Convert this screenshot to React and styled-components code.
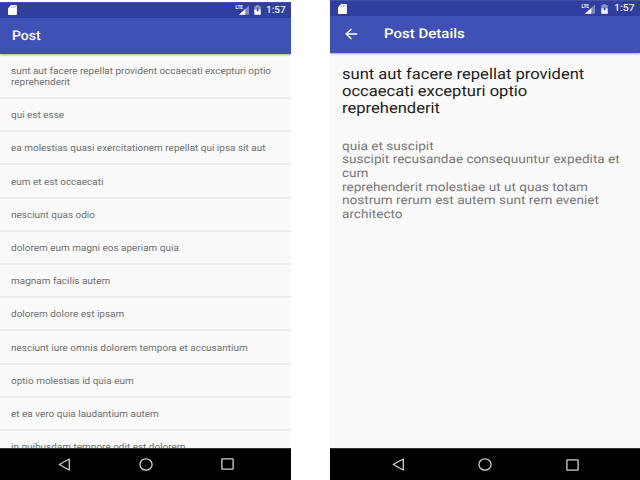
import React from "react";
import styled, { createGlobalStyle } from "styled-components";

const Global = createGlobalStyle`
  * { box-sizing: border-box; }
  body {
    margin: 0;
    background: #fff;
    font-family: Roboto, "Liberation Sans", sans-serif;
    text-rendering: geometricPrecision;
  }
`;

const Stage = styled.main`
  width: 640px;
  height: 480px;
  overflow: hidden;
  display: flex;
  align-items: flex-start;
  justify-content: space-between;
`;

const Phone = styled.section`
  width: ${(p) => p.$width}px;
  height: ${(p) => p.$height}px;
  margin-top: ${(p) => p.$top}px;
  flex: none;
  display: flex;
  flex-direction: column;
  overflow: hidden;
  background: #fafafa;
`;

const StatusBar = styled.div`
  height: ${(p) => p.$height}px;
  flex: none;
  display: flex;
  align-items: center;
  background: #303f9f;
  border-top: 1px solid #4451a7;
  padding: 0 6px 0 8px;
`;

const Spacer = styled.div`
  flex: 1;
`;

const Icon = styled.svg`
  display: block;
  flex: none;
  overflow: visible;
  margin-right: ${(p) => p.$gap || 0}px;
`;

const Clock = styled.span`
  display: block;
  width: ${(p) => p.$width}px;
  padding-top: 1px;
  font-size: 10px;
  line-height: 14px;
  font-weight: 500;
  color: #eef0fa;
  white-space: nowrap;
  transform: scaleX(${(p) => p.$stretch});
  transform-origin: left;
`;

const Toolbar = styled.header`
  height: ${(p) => p.$height}px;
  flex: none;
  display: flex;
  align-items: center;
  padding-left: ${(p) => p.$inset}px;
  background: #3f51b5;
  box-shadow: 0 1px 2px rgba(0, 0, 0, 0.32);
  z-index: 1;
`;

const ToolbarTitle = styled.h1`
  margin: 0;
  padding-top: 2px;
  font-size: 13.3px;
  line-height: 18px;
  font-weight: 500;
  color: #fff;
  white-space: nowrap;
  transform: scaleX(${(p) => p.$stretch});
  transform-origin: left;
`;

const List = styled.ul`
  flex: 1;
  min-height: 0;
  overflow: hidden;
  margin: 0;
  padding: 0;
  list-style: none;
`;

const Row = styled.li`
  height: ${(p) => (p.$tall ? 45 : 33.2)}px;
  display: flex;
  flex-direction: column;
  justify-content: center;
  padding: ${(p) => (p.$tall ? 3 : 2.6)}px 0 0 11.3px;
  border-bottom: 2px solid #ececec;
`;

const RowLine = styled.span`
  display: block;
  font-size: 9.5px;
  line-height: 11.2px;
  color: #707070;
  white-space: nowrap;
  transform: scaleX(1.05);
  transform-origin: left;
`;

const Details = styled.article`
  flex: 1;
  padding: 13px 0 0 12px;
`;

const Heading = styled.h2`
  margin: 0 0 23px;
  font-weight: 400;
  font-size: 15px;
  line-height: 17px;
  color: #222;
`;

const Body = styled.div`
  font-size: 12px;
  line-height: 13.7px;
  color: #777;
`;

const Line = styled.span`
  display: block;
  white-space: nowrap;
  transform: scaleX(${(p) => p.$stretch});
  transform-origin: left;
`;

const NavBar = styled.nav`
  height: ${(p) => p.$height}px;
  flex: none;
  display: flex;
  align-items: center;
  justify-content: space-between;
  padding: 0 ${(p) => p.$right}px 0 ${(p) => p.$left}px;
  background: #000;
  border-top: 1px solid #333;
`;

const SdCard = () => (
  <Icon width="9" height="10" viewBox="0 0 9 10">
    <path d="M3.2 0H8a.9.9 0 0 1 .9.9V9a.9.9 0 0 1-.9.9H.9A.9.9 0 0 1 0 9V3.2z" fill="#fff" />
    <path d="M3.7 1.2v1.7M5.4 1.2v1.7M7.1 1.2v1.7" stroke="#8e97cb" strokeWidth=".8" />
  </Icon>
);

const LteText = styled.text`
  font: 700 5.8px Roboto, sans-serif;
  fill: #fff;
`;

const Signal = ({ gap }) => (
  <Icon width="13" height="10" viewBox="0 0 13 10" $gap={gap}>
    <path d="M13 .4V9.8H3z" fill="#7e88c5" />
    <path d="M9.3 4V9.8H3z" fill="#fff" />
    <LteText x="-.4" y="4" textLength="7.2" lengthAdjust="spacingAndGlyphs">LTE</LteText>
  </Icon>
);

const Battery = ({ gap }) => (
  <Icon width="7" height="10" viewBox="0 0 7 10" $gap={gap}>
    <path d="M2.2 0h2.6v1H6.7v4H.3V1h1.9z" fill="#8791ca" />
    <path d="M.3 4.4h6.4V9.8H.3z" fill="#fff" />
    <path d="M4 2.6 2.2 5.6h1.2v2l1.7-3H4z" fill="#303f9f" />
  </Icon>
);

const BackArrow = ({ gap }) => (
  <Icon width="13" height="12" viewBox="0 0 13 12" $gap={gap}>
    <path d="M12.2 6H1.5M6.4 1.1 1.2 6l5.2 4.9" fill="none" stroke="#fff" strokeWidth="1.4" />
  </Icon>
);

const NavIcons = () => (
  <>
    <Icon width="12" height="13" viewBox="0 0 12 13">
      <path d="M11.3 1v11L1.2 6.5z" fill="none" stroke="#d0d0d0" strokeWidth="1.3" strokeLinejoin="round" />
    </Icon>
    <Icon width="14" height="13" viewBox="0 0 14 13">
      <ellipse cx="7" cy="6.5" rx="6.1" ry="5.7" fill="none" stroke="#d0d0d0" strokeWidth="1.3" />
    </Icon>
    <Icon width="13" height="12" viewBox="0 0 13 12">
      <rect x=".9" y=".9" width="11.2" height="10.2" rx=".4" fill="none" stroke="#d0d0d0" strokeWidth="1.3" />
    </Icon>
  </>
);

const posts = [
  ["sunt aut facere repellat provident occaecati excepturi optio", "reprehenderit"],
  ["qui est esse"],
  ["ea molestias quasi exercitationem repellat qui ipsa sit aut"],
  ["eum et est occaecati"],
  ["nesciunt quas odio"],
  ["dolorem eum magni eos aperiam quia"],
  ["magnam facilis autem"],
  ["dolorem dolore est ipsam"],
  ["nesciunt iure omnis dolorem tempora et accusantium"],
  ["optio molestias id quia eum"],
  ["et ea vero quia laudantium autem"],
  ["in quibusdam tempore odit est dolorem"],
];

const heading = ["sunt aut facere repellat provident", "occaecati excepturi optio", "reprehenderit"];
const body = [
  "quia et suscipit",
  "suscipit recusandae consequuntur expedita et",
  "cum",
  "reprehenderit molestiae ut ut quas totam",
  "nostrum rerum est autem sunt rem eveniet",
  "architecto",
];

export default function App() {
  return (
    <>
      <Global />
      <Stage>
        <Phone $width={291} $height={478} $top={1.5}>
          <StatusBar $height={16}>
            <SdCard />
            <Spacer />
            <Signal gap={5.5} />
            <Battery gap={5} />
            <Clock $width={19} $stretch={1.0}>1:57</Clock>
          </StatusBar>
          <Toolbar $height={36.5} $inset={11.5}>
            <ToolbarTitle $stretch={1.05}>Post</ToolbarTitle>
          </Toolbar>
          <List>
            {posts.map((lines) => (
              <Row key={lines[0]} $tall={lines.length > 1}>
                {lines.map((text) => <RowLine key={text}>{text}</RowLine>)}
              </Row>
            ))}
          </List>
          <NavBar $height={31.5} $left={58} $right={57}><NavIcons /></NavBar>
        </Phone>
        <Phone $width={310} $height={480} $top={0}>
          <StatusBar $height={16}>
            <SdCard />
            <Spacer />
            <Signal gap={6} />
            <Battery gap={6} />
            <Clock $width={20} $stretch={1.05}>1:57</Clock>
          </StatusBar>
          <Toolbar $height={36.5} $inset={14.5}>
            <BackArrow gap={26.8} />
            <ToolbarTitle $stretch={1.13}>Post Details</ToolbarTitle>
          </Toolbar>
          <Details>
            <Heading>{heading.map((t) => <Line key={t} $stretch={1.104}>{t}</Line>)}</Heading>
            <Body>{body.map((t) => <Line key={t} $stretch={1.132}>{t}</Line>)}</Body>
          </Details>
          <NavBar $height={32} $left={61.5} $right={61}><NavIcons /></NavBar>
        </Phone>
      </Stage>
    </>
  );
}
